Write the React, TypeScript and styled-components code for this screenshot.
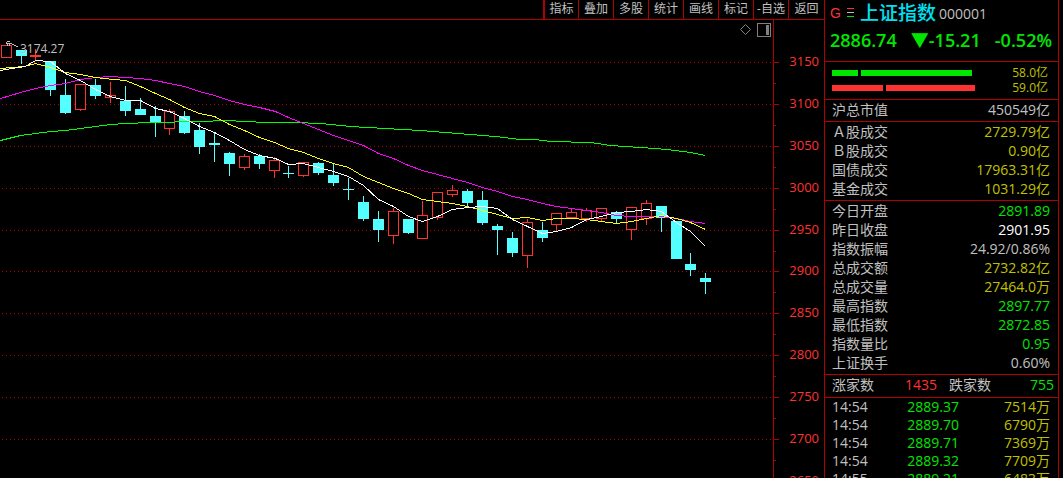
import React from 'react';
import styled, { createGlobalStyle } from 'styled-components';

const C = {
  line: '#b00000',
  up: '#ff3232',
  down: '#54ffff',
  green: '#00e600',
  olive: '#c0c000',
  text: '#c0c0c0',
  white: '#ffffff',
};

const GlobalStyle = createGlobalStyle`
  * { box-sizing: border-box; }
  html, body { margin: 0; background: #000; overflow: hidden; }
  body, button, table {
    font-family: "Open Sans", "Noto Sans CJK SC", sans-serif;
    font-size: 14px;
    color: ${C.text};
  }
`;

const Page = styled.div`
  display: flex;
  height: 100vh;
  overflow: hidden;
  background: #000;
`;

const ChartPane = styled.main`
  flex: 1;
  min-width: 0;
  display: flex;
  flex-direction: column;
`;

const Toolbar = styled.nav`
  display: flex;
  justify-content: flex-end;
  flex: none;
  height: 20px;
  border-bottom: 1px solid ${C.line};
`;

const ToolButton = styled.button`
  width: 35px;
  padding: 0 0 2px;
  border: 0;
  border-left: 1px solid ${C.line};
  background: none;
  font-size: 12px;
  line-height: 17px;
  white-space: nowrap;
  &:first-child { border-left-width: 2px; }
  &:last-child { width: 36px; }
`;

const ChartBody = styled.div`
  flex: 1;
  min-height: 0;
  display: flex;
  position: relative;
`;

const Plot = styled.svg`
  display: block;
  flex: 1;
  min-width: 0;
  height: 100%;
`;

const Axis = styled.svg`
  display: block;
  flex: none;
  width: 51px;
  height: 100%;
`;

const PaneControls = styled.div`
  position: absolute;
  top: 3px;
  right: 53px;
  display: flex;
  gap: 6px;
`;

const IconButton = styled.button`
  display: block;
  padding: 0;
  border: 0;
  background: none;
  height: 14px;
  svg { display: block; }
`;

const Side = styled.aside`
  flex: none;
  width: 235px;
  margin-right: 4px;
  border: solid ${C.line};
  border-width: 0 1px;
`;

const Section = styled.section<{ $pad?: string }>`
  padding: ${(p) => p.$pad ?? '0 8px 2px 7px'};
  border-bottom: 1px solid ${C.line};
  &:last-child { border-bottom: 0; }
`;

const Title = styled.h1`
  display: flex;
  align-items: center;
  height: 26px;
  margin: 0;
  font-weight: 400;
  font-size: 14px;
`;

const Flag = styled.span`
  width: 17px;
  color: ${C.up};
  font-family: "Liberation Sans", sans-serif;
  font-size: 14px;
`;

const Name = styled.span`
  margin: 0 3px 0 6px;
  font-size: 19px;
  line-height: 26px;
  font-weight: 500;
  color: #00e0f0;
`;

const PriceRow = styled.div`
  display: flex;
  justify-content: space-between;
  height: 35px;
  line-height: 28px;
  font-size: 18px;
  font-weight: 600;
  color: ${C.green};
`;

const FlowRow = styled.div`
  display: flex;
  align-items: center;
  height: 15px;
  font-size: 12px;
  line-height: 15px;
  color: ${C.olive};
`;

const Bar = styled.span<{ $w: number; $color: string }>`
  width: ${(p) => p.$w}px;
  height: 6px;
  margin-right: 3px;
  background: ${(p) => p.$color};
`;

const Amount = styled.span`
  margin-left: auto;
  padding-right: 2px;
`;

const DataTable = styled.table<{ $row: number }>`
  width: 100%;
  border-collapse: collapse;
  th, td {
    height: ${(p) => p.$row}px;
    padding: 0;
    font-weight: 400;
    line-height: ${(p) => p.$row}px;
    text-align: right;
    white-space: nowrap;
  }
  th:first-child, td:first-child { text-align: left; }
`;

const Value = styled.td<{ $color: string; $w?: number }>`
  color: ${(p) => p.$color};
  width: ${(p) => (p.$w ? `${p.$w}px` : 'auto')};
`;

const Breadth = styled.dl`
  display: flex;
  margin: 0;
  line-height: 20px;
  dt { width: 54px; }
  dd { margin: 0; }
`;

const Count = styled.dd<{ $color: string; $w: number }>`
  width: ${(p) => p.$w}px;
  color: ${(p) => p.$color};
  text-align: right;
`;

const Gap = styled.dt`
  margin-left: 12px;
`;

// [left, bodyTop, bodyBottom, wickTop, wickBottom, rising]
type Candle = [number, number, number, number, number, 0 | 1];
const candles: Candle[] = [
  [1, 45, 57, 45, 57, 1], [16, 50, 55, 50, 63, 0], [30, 55, 56, 49, 60, 1],
  [45, 61, 89, 61, 95, 0], [60, 95, 112, 79, 113, 0], [75, 84, 109, 84, 110, 1],
  [90, 85, 95, 79, 98, 0], [105, 95, 97, 82, 102, 1], [120, 101, 110, 86, 115, 0],
  [135, 109, 114, 98, 114, 0], [150, 116, 121, 106, 136, 0], [164, 111, 128, 109, 134, 1],
  [179, 116, 132, 111, 133, 0], [194, 130, 146, 123, 153, 0], [209, 143, 144, 133, 161, 0],
  [224, 153, 163, 152, 175, 0], [239, 156, 167, 154, 169, 1], [254, 156, 163, 154, 168, 0],
  [269, 160, 170, 157, 177, 1], [283, 173, 173, 166, 177, 0], [298, 162, 175, 162, 176, 1],
  [313, 163, 172, 162, 174, 0], [328, 175, 182, 163, 185, 0], [343, 189, 189, 178, 199, 0],
  [358, 202, 218, 196, 220, 0], [373, 219, 229, 211, 241, 0], [388, 211, 235, 208, 243, 1],
  [403, 219, 232, 219, 233, 0], [417, 215, 238, 201, 238, 1], [432, 192, 217, 192, 219, 1],
  [447, 190, 194, 185, 196, 1], [462, 191, 202, 189, 205, 0], [477, 200, 222, 191, 224, 0],
  [492, 226, 229, 224, 254, 0], [507, 238, 252, 232, 256, 0], [522, 222, 255, 219, 267, 1],
  [537, 230, 237, 222, 241, 0], [551, 213, 224, 213, 231, 1], [566, 212, 217, 208, 217, 1],
  [581, 210, 218, 208, 221, 1], [596, 208, 218, 208, 221, 1], [611, 212, 218, 211, 222, 0],
  [626, 207, 229, 207, 239, 1], [641, 203, 218, 200, 224, 1], [656, 206, 217, 206, 231, 0],
  [671, 221, 258, 221, 258, 0], [685, 264, 269, 253, 275, 0], [700, 278, 281, 273, 293, 0],
];

const averages = [
  {
    color: '#00ff00',
    points:
      '0,140 20,135 35,133 50,131 65,130 95,126 110,124 125,123 150,122 200,121 225,120 265,122 295,122 320,123 350,126 385,128 420,130 445,132 470,134 495,136 520,139 535,139 550,141 590,142 610,145 640,147 655,148 675,150 690,152 705,155',
  },
  {
    color: '#ff00ff',
    points:
      '0,98 20,92 35,88 50,85 65,83 80,79 95,77 110,76 125,77 140,78 155,80 169,83 184,86 199,91 214,95 229,100 244,104 259,107 275,111 288,117 303,123 318,129 333,135 348,140 363,145 378,153 393,158 408,165 422,170 437,174 452,178 467,182 482,187 497,191 512,196 527,199 542,203 556,206 571,208 586,210 601,212 616,215 631,216 661,216 676,218 690,221 705,223',
  },
  {
    color: '#ffff00',
    points:
      '0,68 24,66 35,63 50,67 65,72 80,74 95,77 103,78 125,80 140,86 155,93 169,99 184,107 199,113 214,116 229,124 244,130 259,137 274,142 288,148 303,152 318,158 333,163 348,167 363,176 378,182 393,188 408,193 422,199 437,201 452,203 467,206 482,210 497,214 512,218 527,217 542,220 556,218 571,218 586,219 601,221 616,223 631,221 646,218 661,215 676,218 690,222 705,229',
  },
  {
    color: '#ffffff',
    points:
      '0,70 18,67 25,66 35,60 50,61 65,73 80,80 95,89 110,96 125,100 140,100 155,108 169,111 184,118 199,126 214,132 229,140 244,149 259,155 275,158 288,164 303,163 318,167 333,171 348,176 363,185 378,199 393,206 408,216 422,221 437,216 452,209 467,207 482,206 497,208 512,219 527,226 542,233 556,231 571,227 586,219 601,216 616,212 631,211 646,209 661,211 676,222 690,231 705,246',
  },
];

const levels: [number, number][] = [
  [62, 3150], [104, 3100], [146, 3050], [188, 3000], [230, 2950], [271, 2900],
  [313, 2850], [355, 2800], [397, 2750], [439, 2700], [481, 2650],
];

// The chart coordinates start at the top of the window, above the toolbar.
const TOP = 20;

const tools = ['指标', '叠加', '多股', '统计', '画线', '标记', '-自选', '返回'];

const turnover: [string, string, string][] = [
  ['Ａ股成交', '2729.79亿', C.olive],
  ['Ｂ股成交', '0.90亿', C.olive],
  ['国债成交', '17963.31亿', C.olive],
  ['基金成交', '1031.29亿', C.olive],
];

const stats: [string, string, string][] = [
  ['今日开盘', '2891.89', C.green],
  ['昨日收盘', '2901.95', C.white],
  ['指数振幅', '24.92/0.86%', C.text],
  ['总成交额', '2732.82亿', C.olive],
  ['总成交量', '27464.0万', C.olive],
  ['最高指数', '2897.77', C.green],
  ['最低指数', '2872.85', C.green],
  ['指数量比', '0.95', C.green],
  ['上证换手', '0.60%', C.text],
];

const trades: [string, string, string][] = [
  ['14:54', '2889.37', '7514万'],
  ['14:54', '2889.70', '6790万'],
  ['14:54', '2889.71', '7369万'],
  ['14:54', '2889.32', '7709万'],
  ['14:55', '2889.21', '6483万'],
];

function KLineChart() {
  return (
    <Plot role="img" aria-label="上证指数 K线" shapeRendering="crispEdges">
      <g transform={`translate(0 ${-TOP})`}>
        {levels.map(([y]) => (
          <line key={y} x1="2" x2="100%" y1={y + 0.5} y2={y + 0.5} stroke={C.line} strokeDasharray="1 3" />
        ))}
        {candles.map(([x, top, bottom, high, low, rising]) => {
          const color = rising ? C.up : C.down;
          const hollow = rising && bottom - top > 1;
          return (
            <g key={x}>
              <rect x={x + 5} y={high} width="1" height={low - high + 1} fill={color} />
              {hollow ? (
                <rect x={x + 0.5} y={top + 0.5} width="10" height={bottom - top} fill="#000" stroke={color} />
              ) : (
                <rect x={x} y={top} width="11" height={bottom - top + 1} fill={color} />
              )}
            </g>
          );
        })}
        <g transform="translate(0.5 0.5)" fill="none">
          {averages.map((a) => (
            <polyline key={a.color} points={a.points} stroke={a.color} />
          ))}
        </g>
        <g fill={C.text}>
          <rect x="7" y="41" width="3" height="1" />
          <rect x="6" y="42" width="1" height="2" />
          <rect x="7" y="43" width="5" height="1" />
          <rect x="7" y="44" width="1" height="2" />
          <rect x="9" y="44" width="1" height="2" />
          <rect x="12" y="44" width="2" height="1" />
          <rect x="14" y="45" width="2" height="1" />
          <rect x="16" y="46" width="2" height="1" />
        </g>
        <text x="20" y="53" fontSize="12" fill={C.text}>3174.27</text>
      </g>
    </Plot>
  );
}

function PriceAxis() {
  return (
    <Axis shapeRendering="crispEdges">
      <g transform={`translate(0 ${-TOP})`}>
        <rect x="0" y={TOP} width="1" height="4000" fill={C.line} />
        {levels.map(([y, label]) => (
          <g key={label} fill={C.line}>
            <rect x="1" y={y} width="5" height="1" />
            <rect x="1" y={y + 21} width="2" height="1" />
            <text x="46" y={y + 4} fontSize="13" textAnchor="end" fill={C.up}>{label}</text>
          </g>
        ))}
      </g>
    </Axis>
  );
}

function SummaryTable({ rows }: { rows: [string, string, string][] }) {
  return (
    <DataTable $row={19}>
      <tbody>
        {rows.map(([label, value, color]) => (
          <tr key={label}>
            <th scope="row">{label}</th>
            <Value $color={color}>{value}</Value>
          </tr>
        ))}
      </tbody>
    </DataTable>
  );
}

export default function App() {
  return (
    <Page>
      <GlobalStyle />
      <ChartPane>
        <Toolbar>
          {tools.map((t) => (
            <ToolButton key={t} type="button">{t}</ToolButton>
          ))}
        </Toolbar>
        <ChartBody>
          <KLineChart />
          <PriceAxis />
          <PaneControls>
            <IconButton type="button" aria-label="标记点">
              <svg width="11" height="14" viewBox="0 0 11 14" fill="none" stroke="#808080">
                <path d="M5.5 1.5L10.5 6.5L5.5 11.5L0.5 6.5Z" />
              </svg>
            </IconButton>
            <IconButton type="button" aria-label="侧栏">
              <svg width="14" height="14" viewBox="0 0 14 14" shapeRendering="crispEdges">
                <rect x="0.5" y="0.5" width="13" height="13" fill="none" stroke="#808080" />
                <rect x="9" y="2" width="3" height="10" fill="#808080" />
              </svg>
            </IconButton>
          </PaneControls>
        </ChartBody>
      </ChartPane>

      <Side>
        <Section $pad="0 6px 0 5px">
          <Title>
            <Flag>G</Flag>
            <svg width="7" height="10" viewBox="0 0 7 10" shapeRendering="crispEdges">
              <rect width="7" height="1" y="0" fill={C.up} />
              <rect width="7" height="1" y="4" fill={C.text} />
              <rect width="7" height="1" y="8" fill={C.green} />
            </svg>
            <Name>上证指数</Name>
            <span>000001</span>
          </Title>
          <PriceRow>
            <span>2886.74</span>
            <span>▼-15.21</span>
            <span>-0.52%</span>
          </PriceRow>
        </Section>

        <Section $pad="3px 8px 4px 7px">
          <FlowRow>
            <Bar $w={26} $color={C.green} />
            <Bar $w={111} $color={C.green} />
            <Amount>58.0亿</Amount>
          </FlowRow>
          <FlowRow>
            <Bar $w={51} $color={C.up} />
            <Bar $w={89} $color={C.up} />
            <Amount>59.0亿</Amount>
          </FlowRow>
        </Section>

        <Section>
          <SummaryTable rows={[['沪总市值', '450549亿', C.text]]} />
        </Section>
        <Section>
          <SummaryTable rows={turnover} />
        </Section>
        <Section>
          <SummaryTable rows={stats} />
        </Section>

        <Section $pad="0 4px 2px 7px">
          <Breadth>
            <dt>涨家数</dt>
            <Count $color={C.up} $w={51}>1435</Count>
            <Gap>跌家数</Gap>
            <Count $color={C.green} $w={51}>755</Count>
          </Breadth>
        </Section>

        <Section $pad="0 8px 0 7px">
          <DataTable $row={18}>
            <tbody>
              {trades.map(([time, price, volume], i) => (
                <tr key={i}>
                  <td>{time}</td>
                  <Value $color={C.green} $w={92}>{price}</Value>
                  <Value $color={C.olive} $w={92}>{volume}</Value>
                </tr>
              ))}
            </tbody>
          </DataTable>
        </Section>
      </Side>
    </Page>
  );
}
